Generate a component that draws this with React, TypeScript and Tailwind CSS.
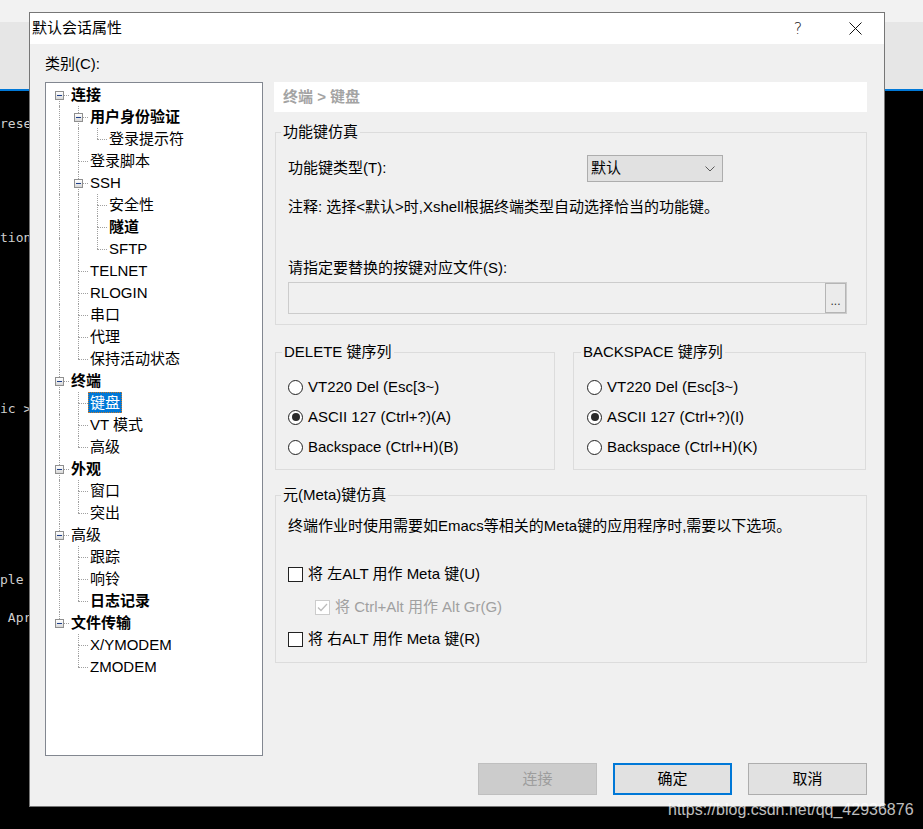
import React from 'react';

type TreeNode = {
  label: string;
  level: number;
  bold?: boolean;
  exp?: boolean;
  next: boolean;
  guides: number[];
  first?: boolean;
  selected?: boolean;
};

const tree: TreeNode[] = [
  { label: '连接', level: 0, bold: true, exp: true, next: true, guides: [], first: true },
  { label: '用户身份验证', level: 1, bold: true, exp: true, next: true, guides: [0] },
  { label: '登录提示符', level: 2, next: false, guides: [0, 1] },
  { label: '登录脚本', level: 1, next: true, guides: [0] },
  { label: 'SSH', level: 1, exp: true, next: true, guides: [0] },
  { label: '安全性', level: 2, next: true, guides: [0, 1] },
  { label: '隧道', level: 2, bold: true, next: true, guides: [0, 1] },
  { label: 'SFTP', level: 2, next: false, guides: [0, 1] },
  { label: 'TELNET', level: 1, next: true, guides: [0] },
  { label: 'RLOGIN', level: 1, next: true, guides: [0] },
  { label: '串口', level: 1, next: true, guides: [0] },
  { label: '代理', level: 1, next: true, guides: [0] },
  { label: '保持活动状态', level: 1, next: false, guides: [0] },
  { label: '终端', level: 0, bold: true, exp: true, next: true, guides: [] },
  { label: '键盘', level: 1, next: true, guides: [0], selected: true },
  { label: 'VT 模式', level: 1, next: true, guides: [0] },
  { label: '高级', level: 1, next: false, guides: [0] },
  { label: '外观', level: 0, bold: true, exp: true, next: true, guides: [] },
  { label: '窗口', level: 1, next: true, guides: [0] },
  { label: '突出', level: 1, next: false, guides: [0] },
  { label: '高级', level: 0, exp: true, next: true, guides: [] },
  { label: '跟踪', level: 1, next: true, guides: [0] },
  { label: '响铃', level: 1, next: true, guides: [0] },
  { label: '日志记录', level: 1, bold: true, next: false, guides: [0] },
  { label: '文件传输', level: 0, bold: true, exp: true, next: false, guides: [] },
  { label: 'X/YMODEM', level: 1, next: true, guides: [] },
  { label: 'ZMODEM', level: 1, next: false, guides: [] },
];

const colLeft = ['left-[13px]', 'left-[32px]', 'left-[51px]'];
const boxLeft = ['left-[9px]', 'left-[28px]', 'left-[47px]'];
const textPad = ['pl-[23px]', 'pl-[42px]', 'pl-[61px]'];
const dot = 'border-dotted border-[#a0a0a0]';

// terminal lines behind the dialog (19px rows)
const termLines: Record<number, string> = { 0: 'rese', 6: 'tion', 15: 'ic >', 24: 'ple', 26: ' Apr' };

const TreeRow = ({ n }: { n: TreeNode }) => (
  <div className={`relative flex h-[22px] ${textPad[n.level]}`}>
    {n.guides.map(k => <span key={k} className={`absolute top-0 bottom-0 border-l ${dot} ${colLeft[k]}`} />)}
    {!n.first && <span className={`absolute top-0 h-[11px] border-l ${dot} ${colLeft[n.level]}`} />}
    {n.next && <span className={`absolute top-[11px] bottom-0 border-l ${dot} ${colLeft[n.level]}`} />}
    <span className={`absolute top-[11px] w-[10px] border-t ${dot} ${colLeft[n.level]}`} />
    {n.exp && (
      <span className={`absolute top-[7px] w-[9px] h-[9px] border border-[#8f8f8f] bg-linear-to-b from-white to-[#d8d8d8] flex items-center justify-center ${boxLeft[n.level]}`}>
        <span className="w-[5px] h-[1px] bg-[#1e3f8a]" />
      </span>
    )}
    <span
      className={`h-[21px] leading-[21px] px-[2px] whitespace-nowrap ${n.bold ? 'font-bold' : ''} ${
        n.selected ? 'bg-[#0078d7] text-white outline-1 outline-dotted outline-[#c8782a] -outline-offset-1' : 'text-black'
      }`}
    >
      {n.label}
    </span>
  </div>
);

const Radio = ({ checked, label }: { checked?: boolean; label: string }) => (
  <div className="flex items-center gap-[5px] h-[20px]">
    <span className="w-[15px] h-[15px] rounded-full border border-[#222] bg-white flex items-center justify-center">
      {checked && <span className="w-[8px] h-[8px] rounded-full bg-[#2b2b2b]" />}
    </span>
    <span className="leading-[20px] whitespace-nowrap">{label}</span>
  </div>
);

const Check = ({ label, disabled, checked }: { label: string; disabled?: boolean; checked?: boolean }) => (
  <div className={`flex items-center gap-[5px] h-[20px] ${disabled ? 'ml-[27px] text-[#a0a0a0]' : ''}`}>
    <span className={`w-[15px] h-[15px] border bg-white flex items-center justify-center ${disabled ? 'border-[#cccccc]' : 'border-[#222]'}`}>
      {checked && (
        <svg width="11" height="9" viewBox="0 0 11 9">
          <path d="M1 4.5 L4 7.5 L10 1" stroke="#bdbdbd" strokeWidth="1.3" fill="none" />
        </svg>
      )}
    </span>
    <span className="leading-[20px] whitespace-nowrap">{label}</span>
  </div>
);

const Btn = ({ label, kind }: { label: string; kind: 'disabled' | 'default' | 'normal' }) => (
  <div
    className={`w-[119px] h-[32px] flex items-center justify-center ${
      kind === 'disabled'
        ? 'bg-[#cccccc] border border-[#bfbfbf] text-[#9d9d9d]'
        : kind === 'default'
        ? 'bg-[#e1e1e1] border-2 border-[#0078d7] text-black'
        : 'bg-[#e1e1e1] border border-[#adadad] text-black'
    }`}
  >
    {label}
  </div>
);

export default function App() {
  return (
    <div className="relative w-[923px] h-[829px] overflow-hidden flex flex-col bg-black font-['Liberation_Sans','Noto_Sans_CJK_SC',sans-serif] text-[15px]">
      {/* window behind */}
      <div className="h-[22px] bg-[#f2f2f2]" />
      <div className="h-[67px] bg-[#e6e6e6]" />
      <div className="h-[2px] bg-[#0078d7]" />
      <div className="flex-1 pt-[23px] font-['DejaVu_Sans_Mono',monospace] text-[13px] text-[#cfcfcf]">
        {Array.from({ length: 28 }).map((_, i) => (
          <div key={i} className="h-[19px] leading-[19px] whitespace-pre">
            {termLines[i] ?? ''}
          </div>
        ))}
      </div>

      {/* dialog */}
      <div className="absolute left-[29px] top-[12px] w-[856px] h-[795px] border border-[#767676] bg-[#f0f0f0] flex flex-col">
        <div className="h-[31px] bg-white flex items-center">
          <span className="pl-[2px] flex-1 text-black">默认会话属性</span>
          <span className="w-[56px] text-center text-[16px] text-[#222] font-['DejaVu_Sans',sans-serif] font-light">?</span>
          <span className="w-[58px] flex justify-center">
            <svg width="13" height="13" viewBox="0 0 13 13">
              <path d="M0.5 0.5 L12.5 12.5 M12.5 0.5 L0.5 12.5" stroke="#111" strokeWidth="1" />
            </svg>
          </span>
        </div>

        <div className="flex-1 flex flex-col pl-[15px] pt-[10px]">
          <div className="h-[20px] leading-[20px]">类别(C):</div>

          <div className="mt-[8px] flex gap-[11px]">
            <div className="w-[218px] h-[674px] bg-white border border-[#828790] pt-[1px]">
              {tree.map((n, i) => (
                <TreeRow key={i} n={n} />
              ))}
            </div>

            <div className="w-[593px] flex flex-col">
              <div className="h-[30px] bg-white flex items-center pl-[9px] font-bold text-[#a3a3a3]">终端 &gt; 键盘</div>

              <fieldset className="mt-[10px] ml-[1px] border border-[#dcdcdc] pl-[12px] pb-[10px]">
                <legend className="-ml-[7px] px-[2px] leading-[20px]">功能键仿真</legend>
                <div className="mt-[13px] h-[27px] flex items-center">
                  <span className="w-[299px]">功能键类型(T):</span>
                  <div className="w-[136px] h-[27px] bg-[#e1e1e1] border border-[#adadad] flex items-center justify-between pl-[3px] pr-[7px]">
                    <span>默认</span>
                    <svg width="10" height="6" viewBox="0 0 10 6">
                      <path d="M0.5 0.5 L5 5 L9.5 0.5" stroke="#5a5a5a" fill="none" />
                    </svg>
                  </div>
                </div>
                <div className="mt-[15px] leading-[20px]">注释: 选择&lt;默认&gt;时,Xshell根据终端类型自动选择恰当的功能键。</div>
                <div className="mt-[41px] leading-[20px]">请指定要替换的按键对应文件(S):</div>
                <div className="mt-[4px] w-[559px] h-[32px] border border-[#cccccc] bg-[#f0f0f0] flex justify-end">
                  <div className="w-[21px] h-full border border-[#b5b5b5] bg-[#ebebeb] flex items-center justify-center text-[12px] text-[#333] pt-[6px]">
                    ...
                  </div>
                </div>
              </fieldset>

              <div className="mt-[17px] flex ml-[1px]">
                <fieldset className="w-[280px] border border-[#dcdcdc] pl-[12px] pb-[12px]">
                  <legend className="-ml-[6px] px-[2px] leading-[20px]">DELETE 键序列</legend>
                  <div className="mt-[15px] flex flex-col gap-[10px]">
                    <Radio label="VT220 Del (Esc[3~)" />
                    <Radio checked label="ASCII 127 (Ctrl+?)(A)" />
                    <Radio label="Backspace (Ctrl+H)(B)" />
                  </div>
                </fieldset>
                <fieldset className="ml-[18px] w-[293px] border border-[#dcdcdc] pl-[13px] pb-[12px]">
                  <legend className="-ml-[6px] px-[2px] leading-[20px]">BACKSPACE 键序列</legend>
                  <div className="mt-[15px] flex flex-col gap-[10px]">
                    <Radio label="VT220 Del (Esc[3~)" />
                    <Radio checked label="ASCII 127 (Ctrl+?)(I)" />
                    <Radio label="Backspace (Ctrl+H)(K)" />
                  </div>
                </fieldset>
              </div>

              <fieldset className="mt-[15px] ml-[1px] border border-[#dcdcdc] pl-[12px] pb-[13px]">
                <legend className="-ml-[7px] px-[2px] leading-[20px]">元(Meta)键仿真</legend>
                <div className="mt-[11px] leading-[20px]">终端作业时使用需要如Emacs等相关的Meta键的应用程序时,需要以下选项。</div>
                <div className="mt-[28px]">
                  <Check label="将 左ALT 用作 Meta 键(U)" />
                </div>
                <div className="mt-[13px]">
                  <Check disabled checked label="将 Ctrl+Alt 用作 Alt Gr(G)" />
                </div>
                <div className="mt-[12px]">
                  <Check label="将 右ALT 用作 Meta 键(R)" />
                </div>
              </fieldset>
            </div>
          </div>

          <div className="mt-[7px] w-[822px] flex justify-end gap-[16px]">
            <Btn label="连接" kind="disabled" />
            <Btn label="确定" kind="default" />
            <Btn label="取消" kind="normal" />
          </div>
        </div>
      </div>

      {/* watermark */}
      <div className="absolute left-[668px] top-[800px] leading-[20px] text-[16px] text-white/75 font-['Liberation_Sans',sans-serif]">
        https://blog.csdn.net/qq_42936876
      </div>
    </div>
  );
}
